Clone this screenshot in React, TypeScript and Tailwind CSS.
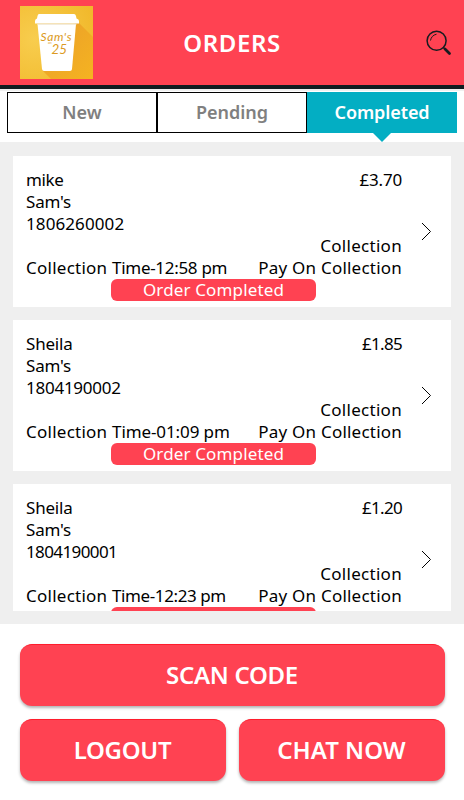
import React from 'react';

interface Order {
    name: string;
    shop: string;
    number: string;
    price: string;
    time: string;
    numberClass: string;
    priceClass: string;
    timeClass: string;
}

const orders: Order[] = [
    { name: 'mike', shop: "Sam's", number: '1806260002', price: '£3.70', time: '12:58 pm', numberClass: 'tracking-[0.1px]', priceClass: 'tracking-[-0.2px]', timeClass: 'tracking-[-0.3px]' },
    { name: 'Sheila', shop: "Sam's", number: '1804190002', price: '£1.85', time: '01:09 pm', numberClass: 'tracking-[-0.25px]', priceClass: 'tracking-[-0.7px]', timeClass: 'tracking-[-0.1px]' },
    { name: 'Sheila', shop: "Sam's", number: '1804190001', price: '£1.20', time: '12:23 pm', numberClass: 'tracking-[-0.6px]', priceClass: 'tracking-[-0.7px]', timeClass: 'tracking-[-0.4px]' },
];

const Logo: React.FC = () => (
    <svg width="73" height="73" viewBox="0 0 73 73" className="shrink-0">
        <defs>
            <radialGradient id="logoBg" cx="0.2" cy="0.45" r="0.85">
                <stop offset="0" stopColor="#f8cd4e" />
                <stop offset="1" stopColor="#f1b92c" />
            </radialGradient>
            <linearGradient id="logoShade" x1="0" y1="0" x2="1" y2="1">
                <stop offset="0" stopColor="#e99d2b" />
                <stop offset="1" stopColor="#f5b321" />
            </linearGradient>
        </defs>
        <rect width="73" height="73" fill="url(#logoBg)" />
        <path d="M57 15L73 31V73H31L22 64Z" fill="url(#logoShade)" />
        <path d="M19 8h35q1.500 0 2 2l.5 2.500q2.500.5 2.500 2.500v2.500H15V15q0-2 2-2.500l.5-2.500q.5-2 1.500-2z" fill="#fff" />
        <path d="M17.500 18h38.500L52 63q-.2 2-2 2H24q-1.800 0-2-2z" fill="#fff" />
        <path d="M17.500 17.500h39l-.2 1.300H17.700z" fill="#efe4cf" />
        <g fill="#dc9a22" fontFamily="Lato, sans-serif" fontStyle="italic">
            <text x="20.500" y="34.500" fontSize="12" textLength="31">Sam's</text>
            <text x="28" y="37.500" fontSize="3.500">on</text>
            <text x="31.500" y="47.500" fontSize="13" textLength="15.500" lengthAdjust="spacingAndGlyphs">25</text>
        </g>
    </svg>
);

const SearchIcon: React.FC = () => (
    <svg width="26" height="26" viewBox="0 0 26 26" fill="none" stroke="#161c20">
        <circle cx="10.600" cy="10.700" r="9.500" strokeWidth="1.500" />
        <path d="M4.500 10.500q.8-5 6-6.300" strokeWidth="1" />
        <path d="M17.400 17.500l2 2" strokeWidth="1.500" />
        <path d="M19 19l4.500 4.500" strokeWidth="2.800" strokeLinecap="round" />
    </svg>
);

const OrderCard: React.FC<{ order: Order }> = ({ order }) => (
    <div className="flex h-[151px] shrink-0 flex-col bg-white pt-[13px] pr-[19px] pl-[13px]">
        <div className="flex items-center justify-between">
            <div className="w-[376px] text-[17px] leading-[22px]">
                <div className="flex justify-between">
                    <span className={order.name === 'mike' ? 'tracking-[-0.4px]' : 'tracking-[-0.2px]'}>{order.name}</span>
                    <span className={order.priceClass}>{order.price}</span>
                </div>
                <div className="tracking-[-0.2px]">{order.shop}</div>
                <div className={order.numberClass}>{order.number}</div>
                <div className="text-right tracking-[0.3px]">Collection</div>
                <div className="flex justify-between whitespace-nowrap">
                    <span>
                        <span className="tracking-[0.25px]">Collection </span>
                        <span className={order.timeClass}>Time-{order.time}</span>
                    </span>
                    <span className="tracking-[0.22px]">Pay On Collection</span>
                </div>
            </div>
            <svg width="11" height="19" viewBox="0 0 11 19" fill="none" stroke="#000" className="mt-3.5 shrink-0">
                <path d="M1 1l8.500 8.500L1 18" />
            </svg>
        </div>
        <div className="ml-[85px] h-[21.500px] w-[205px] rounded-md bg-[#ff4252] text-center text-[17px] leading-[21px] tracking-[0.15px] text-white">
            Order Completed
        </div>
    </div>
);

const ActionButton: React.FC<{ className?: string; children: React.ReactNode }> = ({ className = '', children }) => (
    <button className={`h-[62px] rounded-xl border-t border-[#ff1c2c] bg-[#ff4252] pb-0.5 text-2xl font-semibold text-white shadow-[0_2px_3px_rgba(0,0,0,0.3)] ${className}`}>
        {children}
    </button>
);

const App: React.FC = () => {
    return (
        <div className="flex h-[800px] w-[464px] flex-col overflow-hidden bg-white font-['Noto_Sans',sans-serif] text-black">
            <header className="grid h-[89px] shrink-0 grid-cols-[1fr_auto_1fr] items-start border-b-4 border-[#101c20] bg-[#ff4252] pt-1.5 pr-3 pl-5">
                <Logo />
                <h1 className="mt-[21px] mr-2 text-2xl leading-8 font-semibold tracking-[0.6px] text-white">ORDERS</h1>
                <button className="mt-[24px] justify-self-end" aria-label="Search">
                    <SearchIcon />
                </button>
            </header>
            <nav className="flex h-11 shrink-0 border-t-2 border-[#f0f0f0] px-[7px] pt-px text-[18px] font-semibold text-[#808080]">
                <button className="w-[150px] border border-black">New</button>
                <button className="w-[150px] border border-black">Pending</button>
                <button className="relative w-[150px] bg-[#03aec3] tracking-[-0.1px] text-white">
                    Completed
                    <svg width="18" height="9" viewBox="0 0 18 9" className="absolute top-[41px] left-[66px]">
                        <path d="M0 0h18L9 9z" fill="#03aec3" />
                    </svg>
                </button>
            </nav>
            <main className="mt-[9px] h-[482px] shrink-0 bg-[#efefef] px-[13px] pt-3.5 pb-[13px]">
                <div className="flex h-[455px] flex-col gap-[13px] overflow-hidden">
                    {orders.map((order) => (
                        <OrderCard key={order.number} order={order} />
                    ))}
                </div>
            </main>
            <footer className="flex flex-col gap-[13px] px-[19.5px] pt-5">
                <ActionButton className="w-full tracking-[-0.3px]">SCAN CODE</ActionButton>
                <div className="flex gap-[13px]">
                    <ActionButton className="flex-1 tracking-[-0.3px]">LOGOUT</ActionButton>
                    <ActionButton className="flex-1">CHAT NOW</ActionButton>
                </div>
            </footer>
        </div>
    );
};

export default App;
